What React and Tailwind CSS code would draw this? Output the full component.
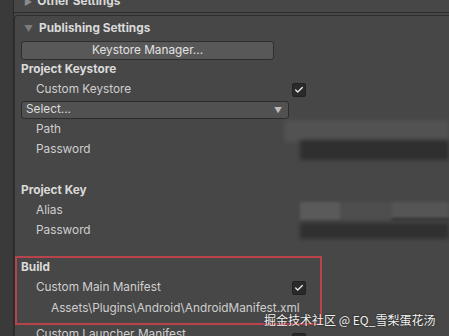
import { Check } from 'lucide-react'

const Checkbox = ({ className = '' }) => (
  <div className={`w-[14px] h-[14px] rounded-[2px] bg-[#2a2a2a] border border-[#222] flex items-center justify-center ${className}`}>
    <Check size={10} strokeWidth={3.2} className="text-[#e8e8e8]" />
  </div>
)

const Row = ({ label, indent = 'pl-[21px]', bold = false, children, h = 'h-[20px]' }) => (
  <div className={`flex items-center ${h} ${indent}`}>
    <span className={`${bold ? 'font-bold text-[#dadada]' : 'text-[#cfcfcf]'} whitespace-nowrap w-[256px]`}>{label}</span>
    {children}
  </div>
)

export default function App() {
  return (
    <div className="w-[449px] h-[336px] overflow-hidden relative flex bg-[#474747] text-[11.8px] font-['Inter','Noto_Sans',sans-serif]">
      <div className="w-[14px] shrink-0 bg-[#3a3a3a] border-r border-[#2b2b2b]" />

      <div className="flex-1 flex flex-col min-w-0">
        {/* other settings, clipped at top */}
        <div className="-mt-[8px] h-[21px] shrink-0 flex items-center pl-[10px] gap-[5px] border-b border-[#2e2e2e]">
          <span className="text-[#8a8a8a] text-[9px]">▶</span>
          <span className="font-bold text-[#dadada]">Other Settings</span>
        </div>

        {/* publishing settings */}
        <div className="mt-[2px] flex-1 border-t border-l border-[#2e2e2e] rounded-tl-[4px] flex flex-col">
          <div className="h-[25px] pt-[1px] flex items-center pl-[9px] gap-[6px]">
            <span className="text-[#7c7c7c] text-[9px]">▼</span>
            <span className="font-bold text-[#dadada]">Publishing Settings</span>
          </div>

          <div className="pl-[6px]">
            <div className="w-[253px] h-[19px] rounded-[3px] bg-[#585858] border border-[#2f2f2f] flex items-center justify-center text-[#e2e2e2]">
              Keystore Manager...
            </div>
          </div>

          <Row label="Project Keystore" bold indent="pl-[6px]" />
          <Row label="Custom Keystore">
            <Checkbox />
          </Row>

          <div className="pl-[6px] h-[19px] flex items-center">
            <div className="w-[268px] h-[18px] rounded-[3px] bg-[#515151] border border-[#2c2c2c] flex items-center justify-between pl-[4px] pr-[6px] text-[#dcdcdc]">
              <span>Select...</span>
              <span className="text-[#bdbdbd] text-[8px]">▼</span>
            </div>
          </div>

          <div className="h-[1px]" />
          <Row label="Path">
            <div className="flex-1 h-[22px] mt-[2px] ml-[-8px] bg-[#525252] blur-[2px]" />
          </Row>
          <Row label="Password">
            <div className="flex-1 h-[20px] ml-[8px] bg-[#2f2f2f] blur-[2px]" />
          </Row>
          <div className="h-[21px]" />

          <Row label="Project Key" bold indent="pl-[6px]" />
          <Row label="Alias">
            <div className="flex-1 h-[18px] ml-[8px] flex gap-0 blur-[1.5px]">
              <div className="w-[40px] bg-[#5a5a5a]" />
              <div className="w-[52px] bg-[#4e4e4e]" />
              <div className="flex-1 bg-[#555] border-b-2 border-[#2c2c2c]" />
            </div>
          </Row>
          <Row label="Password">
            <div className="flex-1 h-[16px] ml-[8px] bg-[#303030] blur-[2px]" />
          </Row>
          <div className="h-[15px]" />

          <div className="w-[307px] border-2 border-[#b8434a] flex flex-col pb-[2px]">
            <Row label="Build" bold indent="pl-[4px]" />
            <Row label="Custom Main Manifest" indent="pl-[19px]" h="h-[19px]">
              <Checkbox />
            </Row>
            <div className="h-[24px] pl-[34px] flex items-center text-[#cfcfcf] whitespace-nowrap">
              Assets\Plugins\Android\AndroidManifest.xml
            </div>
          </div>

          <Row label="Custom Launcher Manifest">
            <Checkbox className="mt-[10px]" />
          </Row>
        </div>
      </div>

      <div className="absolute left-[264px] top-[312px] text-[12px] leading-[16px] text-[#f2f2f2] whitespace-nowrap font-['Noto_Sans_CJK_SC',sans-serif] [text-shadow:0_0_2px_rgba(0,0,0,0.7)]">
        掘金技术社区 @ EQ_雪梨蛋花汤
      </div>
    </div>
  )
}
